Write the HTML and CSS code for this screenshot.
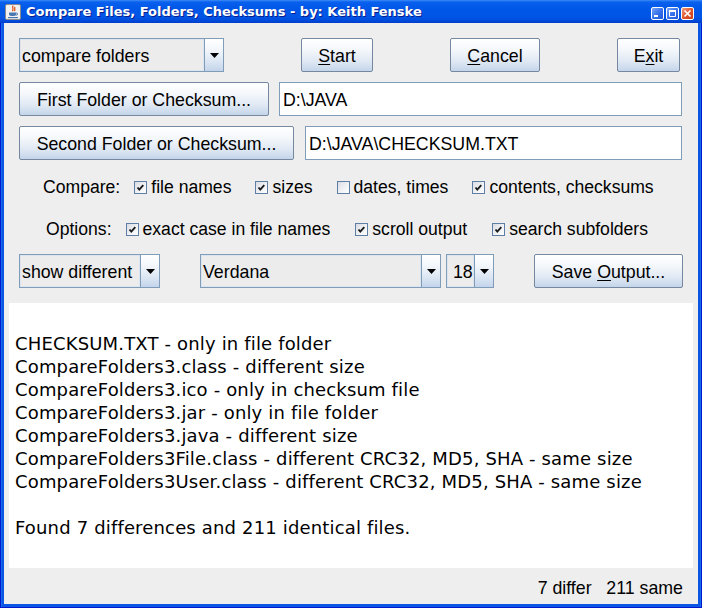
FILE: index.html
```html
<!DOCTYPE html>
<html>
<head>
<meta charset="utf-8">
<title>Compare Files, Folders, Checksums</title>
<link rel="stylesheet" href="styles.css">
</head>
<body>
<div class="window">
  <div class="titlebar">
    <svg class="appicon" width="16" height="16" viewBox="0 0 16 16">
      <rect x="0.5" y="0.5" width="15" height="15" rx="1.5" fill="#f2f2f2" stroke="#8c8c8c"/>
      <path d="M8.2 1.8 C6.2 3.6 9.4 4.6 7.4 7.2 M10 3 C9 4.4 10.6 5.3 9.4 7.2" stroke="#e0561b" stroke-width="1.3" fill="none"/>
      <path d="M4 8.6 H11.2 V10.4 C11.2 12.6 4 12.6 4 10.4 Z" fill="#4a78b0"/>
      <path d="M11.2 9 C13.2 9 13.2 11.2 11 11.2" stroke="#4a78b0" stroke-width="1" fill="none"/>
      <path d="M3 13.6 H13" stroke="#4a78b0" stroke-width="1.2"/>
    </svg>
    <span class="title">Compare Files, Folders, Checksums - by: Keith Fenske</span>
    <div class="tbtns">
      <span class="tb">
        <svg width="11" height="11" viewBox="0 0 11 11"><rect x="2" y="7" width="4" height="2" fill="#fff"/></svg>
      </span>
      <span class="tb">
        <svg width="11" height="11" viewBox="0 0 11 11"><path d="M2.5 2.5 H8.5 V8.5 H2.5 Z" stroke="#fff" fill="none"/><rect x="2" y="2" width="7" height="2" fill="#fff"/></svg>
      </span>
      <span class="tb close">
        <svg width="11" height="11" viewBox="0 0 11 11"><path d="M2.5 2.5 L8.5 8.5 M8.5 2.5 L2.5 8.5" stroke="#fff" stroke-width="1.7"/></svg>
      </span>
    </div>
  </div>

  <div class="client">
    <div class="row row1">
      <div class="combo w-action">
        <div class="field">compare folders</div>
        <div class="arrow"><svg width="9" height="5" viewBox="0 0 9 5"><path d="M0 0 H9 L4.5 5 Z" fill="#000"/></svg></div>
      </div>
      <button class="btn w-start"><u>S</u>tart</button>
      <button class="btn w-cancel"><u>C</u>ancel</button>
      <button class="btn w-exit">E<u>x</u>it</button>
    </div>

    <div class="row row2">
      <button class="btn w-first">First Folder or Checksum...</button>
      <div class="tfield">D:\JAVA</div>
    </div>

    <div class="row row3">
      <button class="btn w-second">Second Folder or Checksum...</button>
      <div class="tfield">D:\JAVA\CHECKSUM.TXT</div>
    </div>

    <div class="checks checks-compare">
      <span class="clabel">Compare:</span>
      <span class="citem first"><span class="cb on"><svg width="11" height="11" viewBox="0 0 11 11"><path d="M2.5 5.5 L4.3 7.6 L8.3 3.2" stroke="#1a1a1a" stroke-width="1.9" fill="none"/></svg></span>file names</span>
      <span class="citem"><span class="cb on"><svg width="11" height="11" viewBox="0 0 11 11"><path d="M2.5 5.5 L4.3 7.6 L8.3 3.2" stroke="#1a1a1a" stroke-width="1.9" fill="none"/></svg></span>sizes</span>
      <span class="citem"><span class="cb"></span>dates, times</span>
      <span class="citem"><span class="cb on"><svg width="11" height="11" viewBox="0 0 11 11"><path d="M2.5 5.5 L4.3 7.6 L8.3 3.2" stroke="#1a1a1a" stroke-width="1.9" fill="none"/></svg></span>contents, checksums</span>
    </div>

    <div class="checks checks-options">
      <span class="clabel">Options:</span>
      <span class="citem first"><span class="cb on"><svg width="11" height="11" viewBox="0 0 11 11"><path d="M2.5 5.5 L4.3 7.6 L8.3 3.2" stroke="#1a1a1a" stroke-width="1.9" fill="none"/></svg></span>exact case in file names</span>
      <span class="citem"><span class="cb on"><svg width="11" height="11" viewBox="0 0 11 11"><path d="M2.5 5.5 L4.3 7.6 L8.3 3.2" stroke="#1a1a1a" stroke-width="1.9" fill="none"/></svg></span>scroll output</span>
      <span class="citem"><span class="cb on"><svg width="11" height="11" viewBox="0 0 11 11"><path d="M2.5 5.5 L4.3 7.6 L8.3 3.2" stroke="#1a1a1a" stroke-width="1.9" fill="none"/></svg></span>search subfolders</span>
    </div>

    <div class="row row6">
      <div class="combo w-show">
        <div class="field">show different</div>
        <div class="arrow"><svg width="9" height="5" viewBox="0 0 9 5"><path d="M0 0 H9 L4.5 5 Z" fill="#000"/></svg></div>
      </div>
      <div class="combo w-font">
        <div class="field">Verdana</div>
        <div class="arrow"><svg width="9" height="5" viewBox="0 0 9 5"><path d="M0 0 H9 L4.5 5 Z" fill="#000"/></svg></div>
      </div>
      <div class="combo w-size">
        <div class="field">18</div>
        <div class="arrow"><svg width="9" height="5" viewBox="0 0 9 5"><path d="M0 0 H9 L4.5 5 Z" fill="#000"/></svg></div>
      </div>
      <button class="btn w-save">Save <u>O</u>utput...</button>
    </div>

    <div class="output">
      <div class="line">&nbsp;</div>
      <div class="line">CHECKSUM.TXT - only in file folder</div>
      <div class="line">CompareFolders3.class - different size</div>
      <div class="line">CompareFolders3.ico - only in checksum file</div>
      <div class="line">CompareFolders3.jar - only in file folder</div>
      <div class="line">CompareFolders3.java - different size</div>
      <div class="line">CompareFolders3File.class - different CRC32, MD5, SHA - same size</div>
      <div class="line">CompareFolders3User.class - different CRC32, MD5, SHA - same size</div>
      <div class="line">&nbsp;</div>
      <div class="line">Found 7 differences and 211 identical files.</div>
    </div>

    <div class="status">7 differ   211 same</div>
  </div>
</div>
</body>
</html>
```

FILE: styles.css
```css
html, body {
  margin: 0;
  padding: 0;
  background: #ffffff;
  overflow: hidden;
}

.window {
  width: 702px;
  height: 608px;
  box-sizing: border-box;
  display: flex;
  flex-direction: column;
  background: #0b57e4;
  box-shadow: inset 1px 0 #0019cf, inset -1px 0 #0019cf, inset 0 -1px #0019cf, inset 2px 0 #166aee, inset -2px 0 #166aee;
  font-family: "Liberation Sans", Arial, sans-serif;
}

/* ---------- title bar ---------- */
.titlebar {
  height: 23px;
  flex: none;
  display: flex;
  align-items: flex-start;
  padding-left: 5px;
  box-sizing: border-box;
  background: linear-gradient(#3d8cf7 0px, #0a60ee 2px, #0058e8 8px, #0055e5 17px, #0049da 21px, #003dc8 23px);
}

.appicon {
  flex: none;
  margin-top: 4px;
}

.title {
  margin-left: 5px;
  margin-top: 3px;
  font-family: "DejaVu Sans", Verdana, sans-serif;
  font-weight: bold;
  font-size: 13px;
  line-height: 17px;
  color: #ffffff;
  text-shadow: 1px 1px 0 #0a1e8c;
  white-space: nowrap;
}

.tbtns {
  margin-left: auto;
  margin-right: 8px;
  margin-top: 7px;
  display: flex;
  gap: 2px;
}

.tb {
  width: 13px;
  height: 13px;
  box-sizing: border-box;
  border: 1px solid #ffffff;
  border-radius: 2px;
  background: linear-gradient(135deg, #7aa8f8 0%, #3a72ec 50%, #1f55d8 100%);
  display: flex;
  align-items: center;
  justify-content: center;
}

.tb.close {
  background: linear-gradient(135deg, #f0a080 0%, #e0542c 50%, #c8401c 100%);
}

/* ---------- client area ---------- */
.client {
  flex: 1;
  margin: 0 4px 4px 4px;
  background: #eeeeee;
  display: flex;
  flex-direction: column;
  font-size: 17.75px;
  color: #000000;
}

.row {
  display: flex;
  height: 34px;
  flex: none;
  padding-left: 15px;
}

.row1 { margin-top: 15px; gap: 77px; }
.row2 { margin-top: 10px; gap: 10px; padding-right: 16px; }
.row3 { margin-top: 10px; gap: 11px; padding-right: 16px; }
.row6 { margin-top: 14px; }

/* buttons */
.btn {
  height: 34px;
  box-sizing: border-box;
  margin: 0;
  padding: 3px 0 0 0;
  border: 1px solid #76889f;
  border-radius: 2px;
  background: linear-gradient(#ffffff 0%, #f4f7fb 35%, #dfe8f3 70%, #c4d5ea 100%);
  font-family: "Liberation Sans", Arial, sans-serif;
  font-size: 17.75px;
  color: #000000;
  text-align: center;
  white-space: nowrap;
  flex: none;
}

.btn u {
  text-underline-offset: 2px;
}

.w-start { width: 72px; }
.w-cancel { width: 90px; }
.w-exit { width: 63px; }
.w-first { width: 250px; }
.w-second { width: 275px; }
.w-save { width: 149px; margin-left: 40px; }

/* text fields */
.tfield {
  flex: 1;
  height: 34px;
  box-sizing: border-box;
  border: 1px solid #7f9db9;
  background: #ffffff;
  padding: 2px 0 0 3px;
  display: flex;
  align-items: center;
  white-space: nowrap;
}

/* combo boxes */
.combo {
  display: flex;
  height: 34px;
  box-sizing: border-box;
  border: 1px solid #7f9db9;
  flex: none;
}

.combo .field {
  flex: 1;
  background: #ececec;
  box-shadow: inset 0 0 0 1px #dbe4ef;
  padding: 2px 0 0 2px;
  display: flex;
  align-items: center;
  white-space: nowrap;
  overflow: hidden;
}

.combo .arrow {
  width: 19px;
  box-sizing: border-box;
  border-left: 1px solid #7f9db9;
  background: linear-gradient(#ffffff 0%, #f2f6fb 35%, #dbe6f3 70%, #c3d4ea 100%);
  display: flex;
  align-items: center;
  justify-content: center;
  padding-top: 1px;
}

.w-action { width: 205px; }
.w-show { width: 141px; }
.w-font { width: 241px; margin-left: 40px; }
.w-size { width: 48px; margin-left: 5px; }
.w-size .field { padding-left: 6px; }

/* checkbox rows */
.checks {
  display: flex;
  align-items: center;
  height: 21px;
  flex: none;
  white-space: nowrap;
  font-size: 17.6px;
}

.checks-compare { margin-top: 17px; padding-left: 39px; }
.checks-options { margin-top: 21px; padding-left: 42px; }

.citem {
  display: flex;
  align-items: center;
  margin-left: 24px;
}

.checks-options .citem { margin-left: 25px; }
.citem.first, .checks-options .citem.first { margin-left: 14px; }

.cb {
  width: 13px;
  height: 13px;
  box-sizing: border-box;
  border: 1px solid #5f7ea6;
  background: linear-gradient(135deg, #d9dce2 0%, #eef0f3 50%, #ffffff 100%);
  margin-right: 4px;
  display: flex;
  align-items: center;
  justify-content: center;
  flex: none;
}

/* output area */
.output {
  margin: 15px 5px 0 5px;
  height: 265px;
  flex: none;
  box-sizing: border-box;
  background: #ffffff;
  padding: 6px 4px 0 6px;
  font-family: "DejaVu Sans", Verdana, sans-serif;
  font-size: 18px;
  letter-spacing: 0.16px;
  line-height: 23px;
  color: #000000;
  white-space: nowrap;
  overflow: hidden;
}

/* status line */
.status {
  flex: 1;
  text-align: right;
  padding: 10px 15px 0 0;
  white-space: pre;
  font-size: 17.75px;
  line-height: 20px;
}
```
